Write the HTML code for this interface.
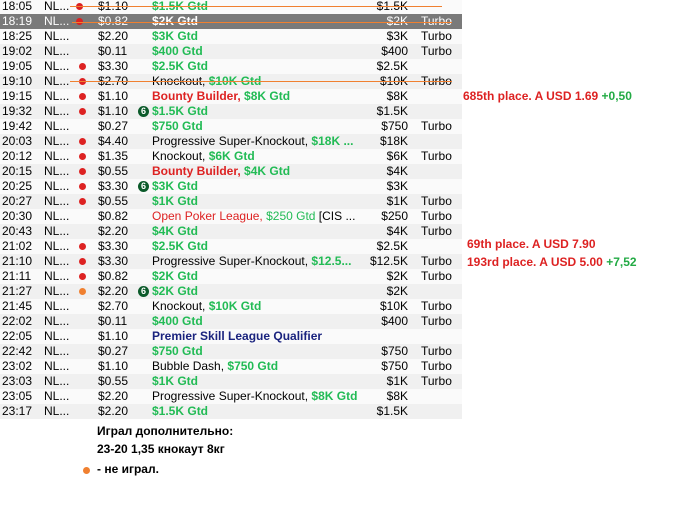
<!DOCTYPE html><html><head><meta charset="utf-8"><style>
body{margin:0;width:689px;height:520px;background:#fff;font-family:"Liberation Sans",Arial,sans-serif;font-size:12px;color:#000;position:relative;overflow:hidden}
.r{position:absolute;left:0;width:462px;height:15px;line-height:15px;white-space:nowrap}
.r span{position:absolute;top:0}
.g{color:#22bb55;font-weight:bold}
.rd{color:#dd2222;font-weight:bold}
.dot{width:7px;height:7px;border-radius:50%;background:#dd2222;top:4px!important}
.or{background:#f08030}
.b{width:11px;height:11px;border-radius:50%;background:#0b5a2a;color:#fff;font-size:9px;font-weight:bold;line-height:11px;text-align:center;top:2px!important}
.ln{position:absolute;height:1px;background:#f08030}
.an{position:absolute;left:463px;font-weight:bold;color:#dd2222;font-size:12px}
.an i{font-style:normal;color:#22aa44}
.ft{position:absolute;left:97px;font-weight:bold;font-size:12px}
</style></head><body>
<div id="t"></div>
<script>
var R=[
["18:05",1,"$1.10",0,'<b class="g">$1.5K Gtd</b>',"$1.5K",""],
["18:19",1,"$0.82",0,'<b style="color:#fff">$2K Gtd</b>',"$2K","Turbo"],
["18:25",0,"$2.20",0,'<b class="g">$3K Gtd</b>',"$3K","Turbo"],
["19:02",0,"$0.11",0,'<b class="g">$400 Gtd</b>',"$400","Turbo"],
["19:05",1,"$3.30",0,'<b class="g">$2.5K Gtd</b>',"$2.5K",""],
["19:10",1,"$2.70",0,'Knockout, <b class="g">$10K Gtd</b>',"$10K","Turbo"],
["19:15",1,"$1.10",0,'<b class="rd">Bounty Builder, </b><b class="g">$8K Gtd</b>',"$8K",""],
["19:32",1,"$1.10",1,'<b class="g">$1.5K Gtd</b>',"$1.5K",""],
["19:42",0,"$0.27",0,'<b class="g">$750 Gtd</b>',"$750","Turbo"],
["20:03",1,"$4.40",0,'Progressive Super-Knockout, <b class="g">$18K ...</b>',"$18K",""],
["20:12",1,"$1.35",0,'Knockout, <b class="g">$6K Gtd</b>',"$6K","Turbo"],
["20:15",1,"$0.55",0,'<b class="rd">Bounty Builder, </b><b class="g">$4K Gtd</b>',"$4K",""],
["20:25",1,"$3.30",1,'<b class="g">$3K Gtd</b>',"$3K",""],
["20:27",1,"$0.55",0,'<b class="g">$1K Gtd</b>',"$1K","Turbo"],
["20:30",0,"$0.82",0,'<span style="position:static;color:#dd2222">Open Poker League, </span><span style="position:static;color:#22bb55">$250 Gtd</span> [CIS ...',"$250","Turbo"],
["20:43",0,"$2.20",0,'<b class="g">$4K Gtd</b>',"$4K","Turbo"],
["21:02",1,"$3.30",0,'<b class="g">$2.5K Gtd</b>',"$2.5K",""],
["21:10",1,"$3.30",0,'Progressive Super-Knockout, <b class="g">$12.5...</b>',"$12.5K","Turbo"],
["21:11",1,"$0.82",0,'<b class="g">$2K Gtd</b>',"$2K","Turbo"],
["21:27",2,"$2.20",1,'<b class="g">$2K Gtd</b>',"$2K",""],
["21:45",0,"$2.70",0,'Knockout, <b class="g">$10K Gtd</b>',"$10K","Turbo"],
["22:02",0,"$0.11",0,'<b class="g">$400 Gtd</b>',"$400","Turbo"],
["22:05",0,"$1.10",0,'<b style="color:#1a237e">Premier Skill League Qualifier</b>',"",""],
["22:42",0,"$0.27",0,'<b class="g">$750 Gtd</b>',"$750","Turbo"],
["23:02",0,"$1.10",0,'Bubble Dash, <b class="g">$750 Gtd</b>',"$750","Turbo"],
["23:03",0,"$0.55",0,'<b class="g">$1K Gtd</b>',"$1K","Turbo"],
["23:05",0,"$2.20",0,'Progressive Super-Knockout, <b class="g">$8K Gtd</b>',"$8K",""],
["23:17",0,"$2.20",0,'<b class="g">$1.5K Gtd</b>',"$1.5K",""]];
var h="";
R.forEach(function(r,i){
var bg=i==1?"#7a7a7a":(i%2?"#f0f0f0":"#fafafa");var c=i==1?"#fff":"#000";
h+='<div class="r" style="top:'+(i*15-1)+'px;background:'+bg+';color:'+c+'">';
h+='<span style="left:2px">'+r[0]+'</span><span style="left:44px">NL...</span>';
if(r[1])h+='<span class="dot'+(r[1]==2?' or':'')+'" style="left:'+(i<4?76:79)+'px"></span>';
h+='<span style="left:98px">'+r[2]+'</span>';
if(r[3])h+='<span class="b" style="left:138px">6</span>';
h+='<span style="left:152px">'+r[4]+'</span>';
h+='<span style="right:54px">'+r[5]+'</span><span style="left:421px">'+r[6]+'</span></div>';
});
document.getElementById("t").innerHTML=h;
</script>
<div class="ln" style="left:70px;top:6px;width:372px"></div>
<div class="ln" style="left:72px;top:22px;width:380px"></div>
<div class="ln" style="left:70px;top:81px;width:382px"></div>
<div class="an" style="top:89px">685th place. A USD 1.69 <i>+0,50</i></div>
<div class="an" style="top:237px;left:467px">69th place. A USD 7.90</div>
<div class="an" style="top:255px;left:467px">193rd place. A USD 5.00 <i>+7,52</i></div>
<div class="ft" style="top:424px">Играл дополнительно:</div>
<div class="ft" style="top:442px">23-20 1,35 кнокаут 8кг</div>
<div style="position:absolute;left:83px;top:467px;width:7px;height:7px;border-radius:50%;background:#f08030"></div>
<div class="ft" style="top:462px">- не играл.</div>
</body></html>
